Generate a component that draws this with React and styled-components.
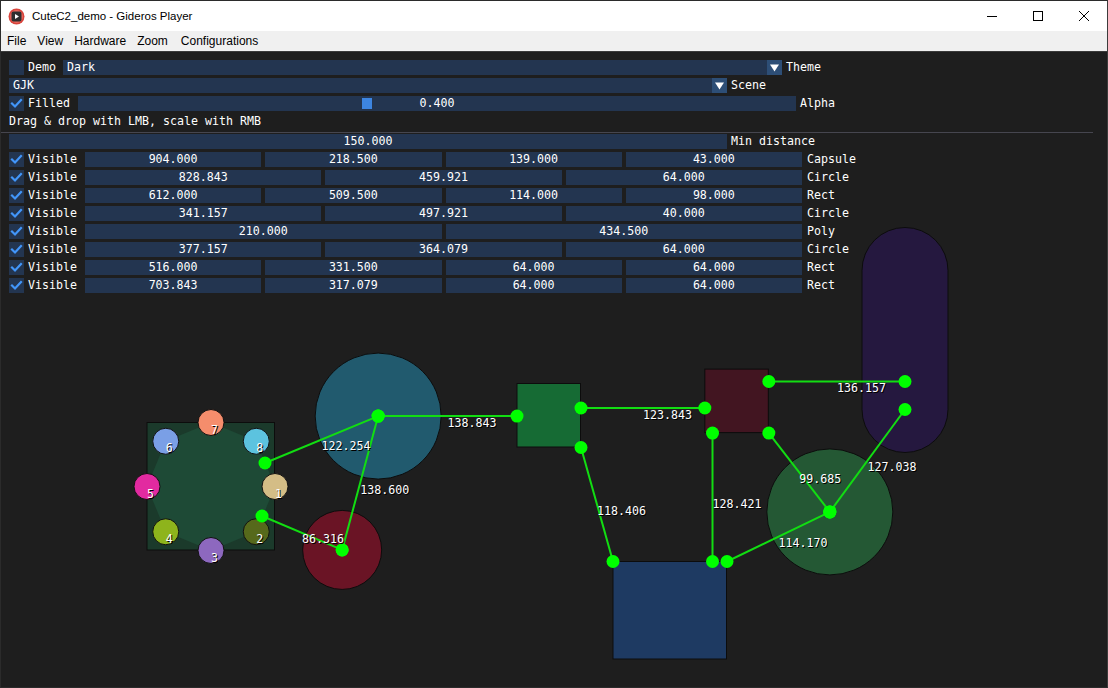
import React from "react";
import styled, { createGlobalStyle } from "styled-components";

const GlobalStyle = createGlobalStyle`
  html, body {
    margin: 0;
    padding: 0;
    background: #1e1e1e;
  }
  body {
    font-family: "Liberation Sans", Arial, sans-serif;
  }
`;

const FRAME = "#233550";
const MONO = `"DejaVu Sans Mono", "Liberation Mono", monospace`;

// ---------- window chrome ----------

const Window = styled.div`
  width: 1108px;
  height: 688px;
  box-sizing: border-box;
  border: 1px solid #2b2b2b;
  border-right-color: #3c3c3c;
  display: flex;
  flex-direction: column;
  overflow: hidden;
  background: #1e1e1e;
`;

const TitleBar = styled.div`
  height: 30px;
  flex: none;
  background: #fff;
  display: flex;
  align-items: center;
  padding-left: 7px;
`;

const Title = styled.span`
  margin-left: 7px;
  font-size: 11.5px;
  color: #000;
  flex: 1;
`;

const WinButton = styled.div`
  width: 46px;
  height: 30px;
  display: flex;
  align-items: center;
  justify-content: center;
`;

const MenuBar = styled.div`
  height: 20px;
  flex: none;
  background: #f0f0f0;
  border-bottom: 1px solid #3a3a3a;
  display: flex;
  align-items: center;
  padding-left: 6px;
  gap: 11px;
`;

const MenuItem = styled.span`
  font-size: 12px;
  color: #000;
  margin-right: ${(p) => p.$extra || 0}px;
`;

// ---------- viewport / imgui panel ----------

const Viewport = styled.div`
  flex: 1;
  position: relative;
  background: #1e1e1e;
`;

const Canvas = styled.svg`
  position: absolute;
  left: 0;
  top: 0;
  width: 100%;
  height: 100%;
`;

const Panel = styled.div`
  position: relative;
  padding: 8px 0 0 8px;
  display: flex;
  flex-direction: column;
  gap: 3px;
  font-family: ${MONO};
  font-size: 11.63px;
  color: #fff;
`;

const Row = styled.div`
  display: flex;
  align-items: center;
  height: 15px;
  white-space: pre;
`;

const Box = styled.div`
  width: 15px;
  height: 15px;
  flex: none;
  background: ${FRAME};
  margin-right: 4px;
  display: flex;
  align-items: center;
  justify-content: center;
`;

const Label = styled.span`
  margin-right: ${(p) => p.$mr ?? 8}px;
  line-height: 15px;
`;

const SideLabel = styled.span`
  margin-left: ${(p) => p.$ml ?? 4}px;
  line-height: 15px;
`;

const Combo = styled.div`
  width: ${(p) => p.$w}px;
  height: 15px;
  display: flex;
  background: ${FRAME};
`;

const ComboText = styled.span`
  flex: 1;
  padding-left: 4px;
  line-height: 15px;
`;

const ArrowButton = styled.div`
  width: 15px;
  height: 15px;
  background: #2d4e76;
  display: flex;
  align-items: center;
  justify-content: center;
`;

const Slider = styled.div`
  width: ${(p) => p.$w}px;
  height: 15px;
  position: relative;
  background: ${FRAME};
  text-align: center;
  line-height: 15px;
`;

const Grab = styled.div`
  position: absolute;
  top: 2px;
  width: 10px;
  height: 11px;
  background: #3d85e0;
`;

const Hint = styled.div`
  height: 15px;
  line-height: 15px;
`;

const Separator = styled.div`
  height: 1px;
  width: 1092px;
  margin-left: -8px;
  background: #46464f;
  margin-bottom: -2px;
`;

const Fields = styled.div`
  width: ${(p) => p.$w}px;
  height: 15px;
  display: flex;
  gap: 4px;
`;

const Field = styled.div`
  flex: 1;
  min-width: 0;
  height: 15px;
  background: ${FRAME};
  text-align: center;
  line-height: 15px;
`;

const Check = () => (
  <svg width="15" height="15" viewBox="0 0 15 15">
    <polyline
      points="3,7.5 6,10.5 12,4"
      fill="none"
      stroke="#4296fa"
      strokeWidth="2.2"
      strokeLinecap="square"
    />
  </svg>
);

const Checkbox = ({ checked }) => <Box>{checked && <Check />}</Box>;

const Arrow = () => (
  <ArrowButton>
    <svg width="9" height="8" viewBox="0 0 9 8">
      <polygon points="0,0.5 9,0.5 4.5,7.5" fill="#fff" />
    </svg>
  </ArrowButton>
);

// ---------- data ----------

const shapes = [
  { kind: "Capsule", values: ["904.000", "218.500", "139.000", "43.000"] },
  { kind: "Circle", values: ["828.843", "459.921", "64.000"] },
  { kind: "Rect", values: ["612.000", "509.500", "114.000", "98.000"] },
  { kind: "Circle", values: ["341.157", "497.921", "40.000"] },
  { kind: "Poly", values: ["210.000", "434.500"] },
  { kind: "Circle", values: ["377.157", "364.079", "64.000"] },
  { kind: "Rect", values: ["516.000", "331.500", "64.000", "64.000"] },
  { kind: "Rect", values: ["703.843", "317.079", "64.000", "64.000"] },
];

const links = [
  { a: [264, 411], b: [377.157, 364.079], d: "122.254" },
  { a: [261, 464], b: [341.157, 497.921], d: "86.316" },
  { a: [377.157, 364.079], b: [341.157, 497.921], d: "138.600" },
  { a: [377.157, 364.079], b: [516, 364.079], d: "138.843" },
  { a: [580, 356], b: [703.843, 356], d: "123.843" },
  { a: [580, 395.5], b: [612, 509.5], d: "118.406" },
  { a: [711.5, 381.079], b: [711.5, 509.5], d: "128.421" },
  { a: [767.843, 329.5], b: [904, 329.5], d: "136.157" },
  { a: [767.843, 381.079], b: [828.843, 459.921], d: "99.685" },
  { a: [904, 357.5], b: [828.843, 459.921], d: "127.038" },
  { a: [726, 509.5], b: [828.843, 459.921], d: "114.170" },
];

const vertexColors = [
  "#d4bd86",
  "#56691b",
  "#8d68bf",
  "#8eb41c",
  "#e22aa0",
  "#7a9fe6",
  "#f58d6c",
  "#5cc3df",
];

const POLY = { x: 210, y: 434.5, r: 64 };
const vertices = vertexColors.map((c, i) => {
  const t = (i * Math.PI) / 4;
  return { x: POLY.x + POLY.r * Math.cos(t), y: POLY.y + POLY.r * Math.sin(t), c };
});

const ShadowText = ({ x, y, children, size = 11.63 }) => (
  <g fontFamily={MONO} fontSize={size}>
    <text x={x + 1} y={y + 1} fill="#000">
      {children}
    </text>
    <text x={x} y={y} fill="#fff">
      {children}
    </text>
  </g>
);

const Scene = () => (
  <Canvas>
    <g stroke="#0c0c0c" strokeWidth="1">
      <rect x="861" y="175.5" width="86" height="225" rx="43" fill="#25183f" />
      <circle cx="377.157" cy="364.079" r="63" fill="#215a6e" />
      <circle cx="341.157" cy="497.921" r="39.5" fill="#6a1425" />
      <circle cx="828.843" cy="459.921" r="63" fill="#245834" />
      <rect x="516" y="331.5" width="63.5" height="63.5" fill="#166b34" />
      <rect x="703.843" y="317.079" width="63.5" height="63.5" fill="#421521" />
      <rect x="612" y="509.5" width="113.5" height="97.5" fill="#1e3a62" />
      <rect x="146" y="370.5" width="127.5" height="127.5" fill="#1b3a2b" />
    </g>
    <polygon
      points={vertices.map((v) => `${v.x},${v.y}`).join(" ")}
      fill="#1e4a36"
    />
    {vertices.map((v, i) => (
      <circle
        key={i}
        cx={v.x}
        cy={v.y}
        r="13"
        fill={v.c}
        stroke="#111"
        strokeWidth="1"
      />
    ))}
    {vertices.map((v, i) => (
      <ShadowText key={i} x={v.x} y={v.y + 11}>
        {i + 1}
      </ShadowText>
    ))}
    {links.map((l, i) => (
      <line
        key={i}
        x1={l.a[0]}
        y1={l.a[1]}
        x2={l.b[0]}
        y2={l.b[1]}
        stroke="#12dd12"
        strokeWidth="2"
      />
    ))}
    {links.map((l, i) => (
      <g key={i} fill="#00ff00">
        <circle cx={l.a[0]} cy={l.a[1]} r="6.5" />
        <circle cx={l.b[0]} cy={l.b[1]} r="6.5" />
      </g>
    ))}
    {links.map((l, i) => (
      <ShadowText
        key={i}
        x={(l.a[0] + l.b[0]) / 2}
        y={(l.a[1] + l.b[1]) / 2 + 10.5}
      >
        {l.d}
      </ShadowText>
    ))}
  </Canvas>
);

const ALPHA = 0.4;
const SLIDER_W = 718;

export default function App() {
  return (
    <>
      <GlobalStyle />
      <Window>
        <TitleBar>
          <svg width="17" height="17" viewBox="0 0 17 17">
            <circle cx="8.5" cy="8.5" r="8" fill="#d9443c" />
            <circle cx="8.5" cy="8.5" r="6.5" fill="#e86a60" />
            <rect x="3.5" y="3.5" width="10" height="10" rx="2" fill="#2e2e2e" />
            <polygon points="7,6 7,11 11,8.5" fill="#fff" />
          </svg>
          <Title>CuteC2_demo - Gideros Player</Title>
          <WinButton>
            <svg width="10" height="10" viewBox="0 0 10 10">
              <line x1="0" y1="5.5" x2="10" y2="5.5" stroke="#000" strokeWidth="1" />
            </svg>
          </WinButton>
          <WinButton>
            <svg width="10" height="10" viewBox="0 0 10 10">
              <rect x="0.5" y="0.5" width="9" height="9" fill="none" stroke="#000" strokeWidth="1" />
            </svg>
          </WinButton>
          <WinButton>
            <svg width="10" height="10" viewBox="0 0 10 10">
              <path d="M0 0 L10 10 M10 0 L0 10" stroke="#000" strokeWidth="1" />
            </svg>
          </WinButton>
        </TitleBar>
        <MenuBar>
          <MenuItem>File</MenuItem>
          <MenuItem>View</MenuItem>
          <MenuItem>Hardware</MenuItem>
          <MenuItem $extra={2}>Zoom</MenuItem>
          <MenuItem>Configurations</MenuItem>
        </MenuBar>
        <Viewport>
          <Scene />
          <Panel>
            <Row>
              <Checkbox />
              <Label $mr={7}>Demo</Label>
              <Combo $w={719}>
                <ComboText>Dark</ComboText>
                <Arrow />
              </Combo>
              <SideLabel>Theme</SideLabel>
            </Row>
            <Row>
              <Combo $w={718}>
                <ComboText>GJK</ComboText>
                <Arrow />
              </Combo>
              <SideLabel>Scene</SideLabel>
            </Row>
            <Row>
              <Checkbox checked />
              <Label>Filled</Label>
              <Slider $w={SLIDER_W}>
                <Grab style={{ left: 2 + (SLIDER_W - 14) * ALPHA }} />
                0.400
              </Slider>
              <SideLabel>Alpha</SideLabel>
            </Row>
            <Hint>Drag &amp; drop with LMB, scale with RMB</Hint>
            <Separator />
            <Row>
              <Fields $w={718}>
                <Field>150.000</Field>
              </Fields>
              <SideLabel>Min distance</SideLabel>
            </Row>
            {shapes.map((s, i) => (
              <Row key={i}>
                <Checkbox checked />
                <Label>Visible</Label>
                <Fields $w={717}>
                  {s.values.map((v, j) => (
                    <Field key={j}>{v}</Field>
                  ))}
                </Fields>
                <SideLabel $ml={5}>{s.kind}</SideLabel>
              </Row>
            ))}
          </Panel>
        </Viewport>
      </Window>
    </>
  );
}
